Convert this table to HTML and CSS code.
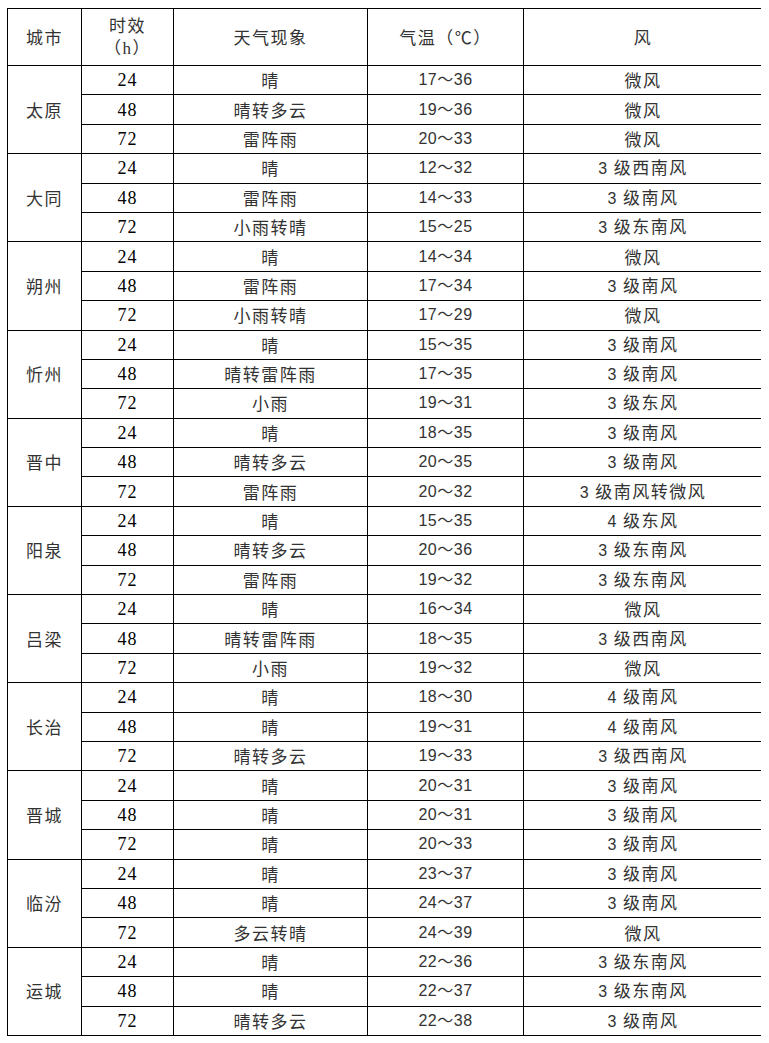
FILE: index.html
```html
<!DOCTYPE html>
<html lang="zh-CN">
<head>
<meta charset="utf-8">
<title>山西天气预报</title>
<link rel="stylesheet" href="styles.css">
</head>
<body>
<table class="wx">
  <colgroup>
    <col class="c-city"><col class="c-h"><col class="c-ph"><col class="c-t"><col class="c-w">
  </colgroup>
  <thead>
    <tr class="head">
      <th>城市</th>
      <th>时效<br><span class="hh">（h）</span></th>
      <th>天气现象</th>
      <th>气温（℃）</th>
      <th>风</th>
    </tr>
  </thead>
  <tbody>
    <tr><td class="city" rowspan="3">太原</td><td class="num">24</td><td>晴</td><td class="tmp">17～36</td><td>微风</td></tr>
    <tr><td class="num">48</td><td>晴转多云</td><td class="tmp">19～36</td><td>微风</td></tr>
    <tr><td class="num">72</td><td>雷阵雨</td><td class="tmp">20～33</td><td>微风</td></tr>

    <tr><td class="city" rowspan="3">大同</td><td class="num">24</td><td>晴</td><td class="tmp">12～32</td><td><span class="d">3</span> 级西南风</td></tr>
    <tr><td class="num">48</td><td>雷阵雨</td><td class="tmp">14～33</td><td><span class="d">3</span> 级南风</td></tr>
    <tr><td class="num">72</td><td>小雨转晴</td><td class="tmp">15～25</td><td><span class="d">3</span> 级东南风</td></tr>

    <tr><td class="city" rowspan="3">朔州</td><td class="num">24</td><td>晴</td><td class="tmp">14～34</td><td>微风</td></tr>
    <tr><td class="num">48</td><td>雷阵雨</td><td class="tmp">17～34</td><td><span class="d">3</span> 级南风</td></tr>
    <tr><td class="num">72</td><td>小雨转晴</td><td class="tmp">17～29</td><td>微风</td></tr>

    <tr><td class="city" rowspan="3">忻州</td><td class="num">24</td><td>晴</td><td class="tmp">15～35</td><td><span class="d">3</span> 级南风</td></tr>
    <tr><td class="num">48</td><td>晴转雷阵雨</td><td class="tmp">17～35</td><td><span class="d">3</span> 级南风</td></tr>
    <tr><td class="num">72</td><td>小雨</td><td class="tmp">19～31</td><td><span class="d">3</span> 级东风</td></tr>

    <tr><td class="city" rowspan="3">晋中</td><td class="num">24</td><td>晴</td><td class="tmp">18～35</td><td><span class="d">3</span> 级南风</td></tr>
    <tr><td class="num">48</td><td>晴转多云</td><td class="tmp">20～35</td><td><span class="d">3</span> 级南风</td></tr>
    <tr><td class="num">72</td><td>雷阵雨</td><td class="tmp">20～32</td><td><span class="d">3</span> 级南风转微风</td></tr>

    <tr><td class="city" rowspan="3">阳泉</td><td class="num">24</td><td>晴</td><td class="tmp">15～35</td><td><span class="d">4</span> 级东风</td></tr>
    <tr><td class="num">48</td><td>晴转多云</td><td class="tmp">20～36</td><td><span class="d">3</span> 级东南风</td></tr>
    <tr><td class="num">72</td><td>雷阵雨</td><td class="tmp">19～32</td><td><span class="d">3</span> 级东南风</td></tr>

    <tr><td class="city" rowspan="3">吕梁</td><td class="num">24</td><td>晴</td><td class="tmp">16～34</td><td>微风</td></tr>
    <tr><td class="num">48</td><td>晴转雷阵雨</td><td class="tmp">18～35</td><td><span class="d">3</span> 级西南风</td></tr>
    <tr><td class="num">72</td><td>小雨</td><td class="tmp">19～32</td><td>微风</td></tr>

    <tr><td class="city" rowspan="3">长治</td><td class="num">24</td><td>晴</td><td class="tmp">18～30</td><td><span class="d">4</span> 级南风</td></tr>
    <tr><td class="num">48</td><td>晴</td><td class="tmp">19～31</td><td><span class="d">4</span> 级南风</td></tr>
    <tr><td class="num">72</td><td>晴转多云</td><td class="tmp">19～33</td><td><span class="d">3</span> 级西南风</td></tr>

    <tr><td class="city" rowspan="3">晋城</td><td class="num">24</td><td>晴</td><td class="tmp">20～31</td><td><span class="d">3</span> 级南风</td></tr>
    <tr><td class="num">48</td><td>晴</td><td class="tmp">20～31</td><td><span class="d">3</span> 级南风</td></tr>
    <tr><td class="num">72</td><td>晴</td><td class="tmp">20～33</td><td><span class="d">3</span> 级南风</td></tr>

    <tr><td class="city" rowspan="3">临汾</td><td class="num">24</td><td>晴</td><td class="tmp">23～37</td><td><span class="d">3</span> 级南风</td></tr>
    <tr><td class="num">48</td><td>晴</td><td class="tmp">24～37</td><td><span class="d">3</span> 级南风</td></tr>
    <tr><td class="num">72</td><td>多云转晴</td><td class="tmp">24～39</td><td>微风</td></tr>

    <tr><td class="city" rowspan="3">运城</td><td class="num">24</td><td>晴</td><td class="tmp">22～36</td><td><span class="d">3</span> 级东南风</td></tr>
    <tr><td class="num">48</td><td>晴</td><td class="tmp">22～37</td><td><span class="d">3</span> 级东南风</td></tr>
    <tr><td class="num">72</td><td>晴转多云</td><td class="tmp">22～38</td><td><span class="d">3</span> 级南风</td></tr>
  </tbody>
</table>
</body>
</html>
```

FILE: styles.css
```css
html, body {
  background: #ffffff;
}
body {
  margin: 8px 8px 0 7px;
  font-family: "Noto Sans CJK SC", "Noto Sans", sans-serif;
  color: #333333;
}
.wx {
  border-collapse: collapse;
  table-layout: fixed;
  width: 755px;
}
.c-city { width: 74px; }
.c-h { width: 92px; }
.c-ph { width: 194px; }
.c-t { width: 156px; }
.c-w { width: 239px; }

.wx th, .wx td {
  border: 1px solid #000000;
  padding: 0;
  text-align: center;
  vertical-align: middle;
  font-size: 17px;
  font-weight: 400;
  letter-spacing: 1.5px;
  line-height: 20px;
}
.wx .head th {
  height: 56px;
  line-height: 22px;
}
.wx td {
  height: 28.4px;
}
.wx .num {
  font-family: "Liberation Serif", "Noto Sans CJK SC", serif;
  font-size: 18px;
  color: #000000;
  letter-spacing: 1px;
}
.wx .tmp {
  font-family: "Liberation Sans", "Noto Sans CJK SC", sans-serif;
  font-size: 16px;
  letter-spacing: 0.5px;
}
.d {
  font-family: "Liberation Sans", sans-serif;
  font-size: 16px;
}
.hh {
  font-family: "Liberation Serif", "Noto Sans CJK SC", serif;
}
```
